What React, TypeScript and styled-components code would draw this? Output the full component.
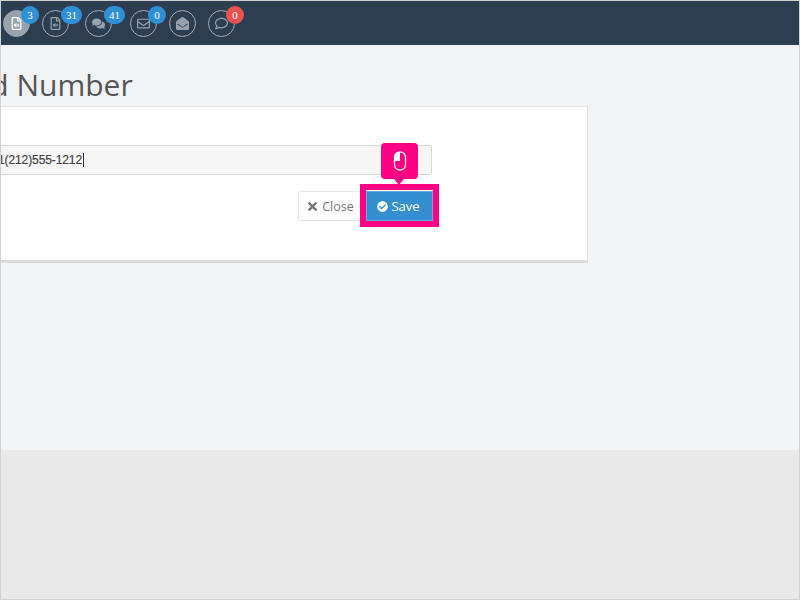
import * as React from 'react'
import styled, { createGlobalStyle } from 'styled-components'
import { FaRegFileAudio, FaComments, FaRegEnvelope, FaEnvelopeOpen, FaRegComment, FaTimes, FaCheckCircle } from 'react-icons/fa'

const Global = createGlobalStyle`
  html, body { margin: 0; padding: 0; background: #e9e9e9; }
  * { box-sizing: border-box; }
`

const Frame = styled.div`
  position: relative;
  width: 800px;
  height: 600px;
  overflow: hidden;
  border: 1px solid #d2d2d2;
  display: flex;
  flex-direction: column;
  background: #e9e9e9;
`

const Nav = styled.nav`
  height: 44px;
  flex: none;
  background: #2c3e50;
  display: flex;
  align-items: flex-start;
  padding: 9px 0 0 2px;
`

const NavItem = styled.div<{ $active?: boolean; $after: number }>`
  position: relative;
  width: 27px;
  height: 27px;
  flex: none;
  margin-right: ${(p) => p.$after}px;
  border-radius: 50%;
  border: 1px solid ${(p) => (p.$active ? '#9aa2ac' : '#a3acb6')};
  background: ${(p) => (p.$active ? '#9aa2ac' : 'transparent')};
  color: ${(p) => (p.$active ? '#ffffff' : '#98a1ab')};
  display: flex;
  align-items: center;
  justify-content: center;
  font-size: 13px;
`

const Badge = styled.span<{ $red?: boolean; $wide?: boolean }>`
  position: absolute;
  top: -5px;
  left: ${(p) => (p.$wide ? '18px' : '17px')};
  min-width: 18px;
  height: 18px;
  padding: 0 ${(p) => (p.$wide ? '5px' : '0')};
  border-radius: 9px;
  background: ${(p) => (p.$red ? '#e9534f' : '#3090d6')};
  color: #fff;
  font: 11px/18px 'Liberation Serif', serif;
  text-align: center;
`

const Content = styled.main`
  height: 405px;
  flex: none;
  background: #f2f3f5;
  padding-top: 20px;
`

const Title = styled.h1`
  margin: 0 0 1px -48px;
  font: 400 30px/40px 'Open Sans', sans-serif;
  color: #555;
  white-space: nowrap;
`

const Panel = styled.section`
  width: 587px;
  height: 157px;
  background: #fff;
  border-right: 1px solid #e2e2e2;
  border-top: 1px solid #e4e4e4;
  border-bottom: 3px solid #dcdcdc;
  padding-top: 38px;
`

const Field = styled.div`
  width: 431px;
  height: 30px;
  background: #f6f6f6;
  border: 1px solid #d9d9d9;
  border-left: 0;
  border-radius: 0 2px 2px 0;
  display: flex;
  align-items: center;
  font: 12px 'Liberation Sans', Arial, sans-serif;
  color: #444;
  -webkit-text-stroke: 0.2px #444;
`

const FieldText = styled.span`
  margin-left: -3px;
  letter-spacing: -0.1px;
`

const Caret = styled.span`
  width: 1px;
  height: 14px;
  background: #333;
  margin-left: 1px;
`

const Actions = styled.div`
  width: 432px;
  display: flex;
  justify-content: flex-end;
  align-items: center;
  gap: 5px;
  margin-top: 16px;
`

const Button = styled.button<{ $primary?: boolean }>`
  height: 30px;
  display: inline-flex;
  align-items: center;
  justify-content: center;
  gap: 3px;
  padding: ${(p) => (p.$primary ? '0 2px 0 0' : '0 0 0 1px')};
  width: ${(p) => (p.$primary ? '67px' : '63px')};
  border-radius: ${(p) => (p.$primary ? '0' : '2px')};
  border: 1px solid ${(p) => (p.$primary ? '#6aa9d8' : '#e4e4e4')};
  background: ${(p) => (p.$primary ? '#338fcf' : '#fff')};
  color: ${(p) => (p.$primary ? '#fff' : '#777')};
  font: ${(p) => (p.$primary ? '13px' : '12.5px')} 'Open Sans', sans-serif;
  svg { font-size: ${(p) => (p.$primary ? '11px' : '13px')}; }
`

const Footer = styled.div`
  flex: 1;
  background: #e9e9e9;
`

const Highlight = styled.div`
  position: absolute;
  left: 359px;
  top: 183px;
  width: 79px;
  height: 43px;
  border: 6px solid #ff0084;
`

const Hint = styled.div`
  position: absolute;
  left: 380px;
  top: 142px;
  width: 37px;
  height: 36px;
  border-radius: 4px;
  background: #ff0084;
  display: flex;
  align-items: center;
  justify-content: center;
  &::after {
    content: '';
    position: absolute;
    left: 13px;
    bottom: -6px;
    border-left: 5px solid transparent;
    border-right: 5px solid transparent;
    border-top: 6px solid #ff0084;
  }
`

const MouseIcon = () => (
  <svg width="14" height="20" viewBox="0 0 14 20" aria-hidden="true">
    <path d="M7 1C3.7 1 1.5 3.3 1.5 6.5v7C1.5 16.7 3.7 19 7 19s5.5-2.3 5.5-5.5v-7C12.5 3.3 10.3 1 7 1z" fill="none" stroke="#fff" strokeWidth="1.3" />
    <path d="M7 1C3.7 1 1.5 3.3 1.5 6.5V10H7z" fill="#fff" />
  </svg>
)

export default function App() {
  return (
    <>
      <Global />
      <Frame>
        <Nav>
          <NavItem $active $after={12}>
            <FaRegFileAudio />
            <Badge>3</Badge>
          </NavItem>
          <NavItem $after={16}>
            <FaRegFileAudio />
            <Badge $wide>31</Badge>
          </NavItem>
          <NavItem $after={18}>
            <FaComments />
            <Badge $wide>41</Badge>
          </NavItem>
          <NavItem $after={12}>
            <FaRegEnvelope />
            <Badge>0</Badge>
          </NavItem>
          <NavItem $after={12}>
            <FaEnvelopeOpen />
          </NavItem>
          <NavItem $after={0}>
            <FaRegComment />
            <Badge $red>0</Badge>
          </NavItem>
        </Nav>
        <Content>
          <Title>Add Number</Title>
          <Panel>
            <Field>
              <FieldText>1(212)555-1212</FieldText>
              <Caret />
            </Field>
            <Actions>
              <Button>
                <FaTimes />
                Close
              </Button>
              <Button $primary>
                <FaCheckCircle />
                Save
              </Button>
            </Actions>
          </Panel>
        </Content>
        <Footer />
        <Highlight />
        <Hint>
          <MouseIcon />
        </Hint>
      </Frame>
    </>
  )
}
